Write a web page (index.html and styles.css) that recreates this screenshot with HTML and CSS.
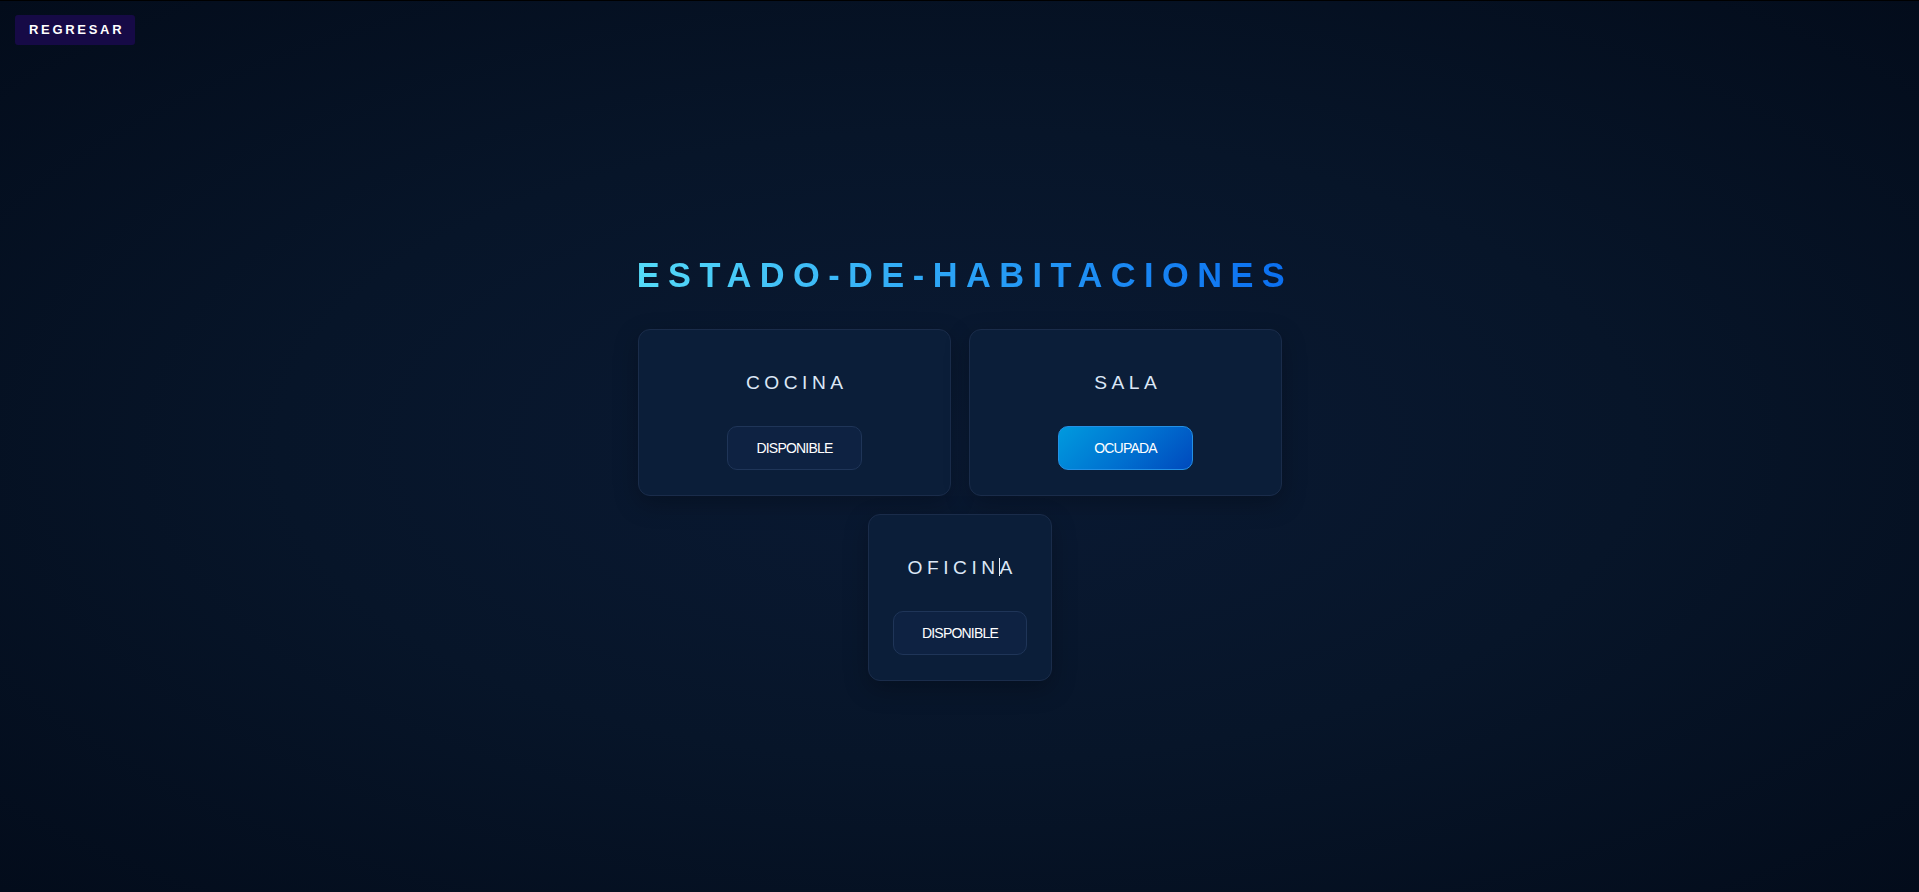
FILE: index.html
```html
<!DOCTYPE html>
<html lang="es">
<head>
    <meta charset="UTF-8">
    <meta name="viewport" content="width=device-width, initial-scale=1.0">
    <title>Estado de habitaciones</title>
    <link rel="stylesheet" href="styles.css">
</head>
<body>
    <header class="eh-top">
        <a href="#" class="eh-back-btn">Regresar</a>
    </header>

    <main class="eh-main">
        <h1 class="eh-title">Estado-de-habitaciones</h1>

        <div class="eh-rooms">
            <div class="eh-row">
                <div class="eh-card eh-card-wide">
                    <h3 class="eh-room-name">Cocina</h3>
                    <button class="eh-status">Disponible</button>
                </div>
                <div class="eh-card eh-card-wide">
                    <h3 class="eh-room-name">Sala</h3>
                    <button class="eh-status busy">Ocupada</button>
                </div>
            </div>
            <div class="eh-row">
                <div class="eh-card">
                    <h3 class="eh-room-name">Oficin<span class="eh-caret">a</span></h3>
                    <button class="eh-status">Disponible</button>
                </div>
            </div>
        </div>
    </main>
</body>
</html>
```

FILE: styles.css
```css
/* Base */
* {
    box-sizing: border-box;
}

html, body {
    margin: 0;
    padding: 0;
}

body {
    min-height: 100vh;
    display: flex;
    flex-direction: column;
    border-top: 1px solid #000000;
    font-family: 'Liberation Sans', Arial, sans-serif;
    color: #ffffff;
    background: radial-gradient(ellipse at center, #0a1a34 0%, #071529 50%, #030c1b 100%);
    background-attachment: fixed;
}

/* Top bar */
.eh-top {
    padding: 14px 15px 0;
}

.eh-back-btn {
    display: inline-block;
    height: 30px;
    line-height: 30px;
    padding: 0 11px 0 14px;
    background-color: #160a46;
    color: #ffffff;
    font-size: 13px;
    font-weight: 700;
    letter-spacing: 2.7px;
    text-transform: uppercase;
    text-decoration: none;
    border-radius: 3px;
}

/* Main area */
.eh-main {
    flex: 1;
    display: flex;
    flex-direction: column;
    align-items: center;
    justify-content: center;
}

.eh-title {
    margin: 0 0 34px;
    padding-left: 11px;
    font-size: 34.4px;
    font-weight: 700;
    letter-spacing: 8.45px;
    text-transform: uppercase;
    background: linear-gradient(90deg, #56dcf8 0%, #2aa2f6 50%, #0a6ef0 100%);
    -webkit-background-clip: text;
    background-clip: text;
    color: transparent;
}

/* Room cards */
.eh-rooms {
    display: flex;
    flex-direction: column;
    gap: 18px;
    padding-left: 1px;
}

.eh-row {
    display: flex;
    justify-content: center;
    gap: 18px;
}

.eh-card {
    display: flex;
    flex-direction: column;
    align-items: center;
    padding: 24px 24px 25px;
    background-color: #0b1e39;
    border: 1px solid #1a2c4a;
    border-radius: 12px;
    box-shadow: 0 8px 24px rgba(0, 0, 0, 0.25);
}

.eh-card-wide {
    width: 313px;
}

.eh-room-name {
    margin: 18px 0 32px;
    padding-left: 4.5px;
    font-size: 19.2px;
    font-weight: 400;
    line-height: 22px;
    letter-spacing: 4.5px;
    text-transform: uppercase;
    color: #dce7f6;
}

.eh-caret {
    position: relative;
}

.eh-caret::before {
    content: '';
    position: absolute;
    left: -1px;
    top: 1px;
    width: 1px;
    height: 18px;
    background-color: #e8eef8;
}

.eh-status {
    width: 134.4px;
    height: 44px;
    padding: 0;
    font-family: 'Liberation Sans', Arial, sans-serif;
    font-size: 14px;
    letter-spacing: -0.8px;
    text-transform: uppercase;
    color: #ffffff;
    background-color: #0e2242;
    border: 1px solid #1f3558;
    border-radius: 10px;
    cursor: pointer;
}

.eh-status.busy {
    background: linear-gradient(135deg, #009ade 0%, #0070d0 55%, #0049bd 100%);
    border-color: #2490e4;
}
```
